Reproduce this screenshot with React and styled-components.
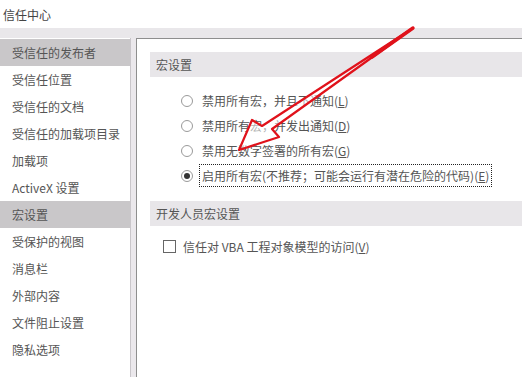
import React from 'react'
import styled, { createGlobalStyle } from 'styled-components';

const GlobalStyle = createGlobalStyle`
    html, body {
        margin: 0;
        padding: 0;
        background: #fff;
    }
    body {
        font-family: "Microsoft YaHei", "Noto Sans CJK SC", "Noto Sans", sans-serif;
        font-size: 12px;
        color: #555;
    }
`;

const navItems = [
    '受信任的发布者',
    '受信任位置',
    '受信任的文档',
    '受信任的加载项目录',
    '加载项',
    'ActiveX 设置',
    '宏设置',
    '受保护的视图',
    '消息栏',
    '外部内容',
    '文件阻止设置',
    '隐私选项',
];

const selectedNav = ['受信任的发布者', '宏设置'];

const macroOptions = [
    { text: '禁用所有宏，并且不通知', key: 'L' },
    { text: '禁用所有宏，并发出通知', key: 'D' },
    { text: '禁用无数字签署的所有宏', key: 'G' },
    { text: '启用所有宏(不推荐；可能会运行有潜在危险的代码)', key: 'E', checked: true },
];

const App = () => {
    return (
        <Window>
            <GlobalStyle />
            <TitleBar>信任中心</TitleBar>
            <Band />
            <Body>
                <Nav>
                    {navItems.map((item) => (
                        <NavItem key={item} active={selectedNav.includes(item)}>{item}</NavItem>
                    ))}
                </Nav>
                <Splitter />
                <Panel>
                    <SectionHeader>宏设置</SectionHeader>
                    <OptionList>
                        {macroOptions.map((opt) => (
                            <OptionRow key={opt.key}>
                                <Radio checked={opt.checked} />
                                <OptionLabel focused={opt.checked}>
                                    {opt.text}(<u>{opt.key}</u>)
                                </OptionLabel>
                            </OptionRow>
                        ))}
                    </OptionList>
                    <SectionHeader>开发人员宏设置</SectionHeader>
                    <CheckRow>
                        <CheckBox />
                        <span>信任对 VBA 工程对象模型的访问(<u>V</u>)</span>
                    </CheckRow>
                </Panel>
            </Body>
            <Arrow viewBox="0 0 522 377" width="522" height="377">
                <path
                    d="M413 28 L272 129 L279 137 L239 150 L252 120 L262 126 Z"
                    fill="rgba(255,255,255,0.55)"
                    stroke="#e0121b"
                    strokeWidth="2.2"
                    strokeLinejoin="round"
                />
                <path d="M413 28 L372 57" stroke="#e0121b" strokeWidth="3.4" strokeLinecap="round" />
            </Arrow>
        </Window>
    )
}

const Window = styled.div`
    position: relative;
    width: 522px;
    height: 377px;
    overflow: hidden;
    background: #fff;
`;

const TitleBar = styled.div`
    height: 28px;
    padding-left: 3px;
    display: flex;
    align-items: center;
    font-size: 12px;
    color: #444;
    background: #fff;
`;

const Band = styled.div`
    height: 10px;
    background: #e9e7ea;
`;

const Body = styled.div`
    display: flex;
    height: 339px;
`;

const Nav = styled.div`
    width: 130px;
    border-right: 1px solid #c9c6ca;
    background: #fff;
    display: flex;
    flex-direction: column;
    padding-top: 1px;
`;

const NavItem = styled.div`
    height: 27px;
    display: flex;
    align-items: center;
    padding-left: 12px;
    background: ${props => props.active ? '#c9c7c9' : 'transparent'};
    color: #555;
    white-space: nowrap;
`;

const Splitter = styled.div`
    width: 5px;
    background: #ebe8ec;
`;

const Panel = styled.div`
    flex: 1;
    border-left: 1px solid #8e8e8e;
    border-top: 1px solid #8e8e8e;
    background: #fff;
    padding: 13px 0 0 13px;
    display: flex;
    flex-direction: column;
`;

const SectionHeader = styled.div`
    height: 25px;
    display: flex;
    align-items: center;
    padding-left: 6px;
    background: #e8e6e9;
    color: #555;
`;

const OptionList = styled.div`
    display: flex;
    flex-direction: column;
    padding: 11px 0 13px 31px;
`;

const OptionRow = styled.div`
    height: 25px;
    display: flex;
    align-items: center;
`;

const Radio = styled.span`
    width: 10px;
    height: 10px;
    border: 1px solid #9a9a9a;
    border-radius: 50%;
    margin-right: 9px;
    display: flex;
    align-items: center;
    justify-content: center;
    background: #fff;
    &::after {
        content: '';
        width: 6px;
        height: 6px;
        border-radius: 50%;
        background: ${props => props.checked ? '#333' : 'transparent'};
    }
`;

const OptionLabel = styled.span`
    padding: 2px 2px;
    margin-left: -3px;
    border: 1px dotted ${props => props.focused ? '#222' : 'transparent'};
    white-space: nowrap;
    color: #555;
`;

const CheckRow = styled.div`
    display: flex;
    align-items: center;
    padding: 12px 0 0 13px;
    color: #555;
    white-space: nowrap;
`;

const CheckBox = styled.span`
    width: 11px;
    height: 11px;
    border: 1px solid #666;
    margin-right: 7px;
    background: #fff;
`;

const Arrow = styled.svg`
    position: absolute;
    left: 0;
    top: 0;
    pointer-events: none;
`;

export default App;
